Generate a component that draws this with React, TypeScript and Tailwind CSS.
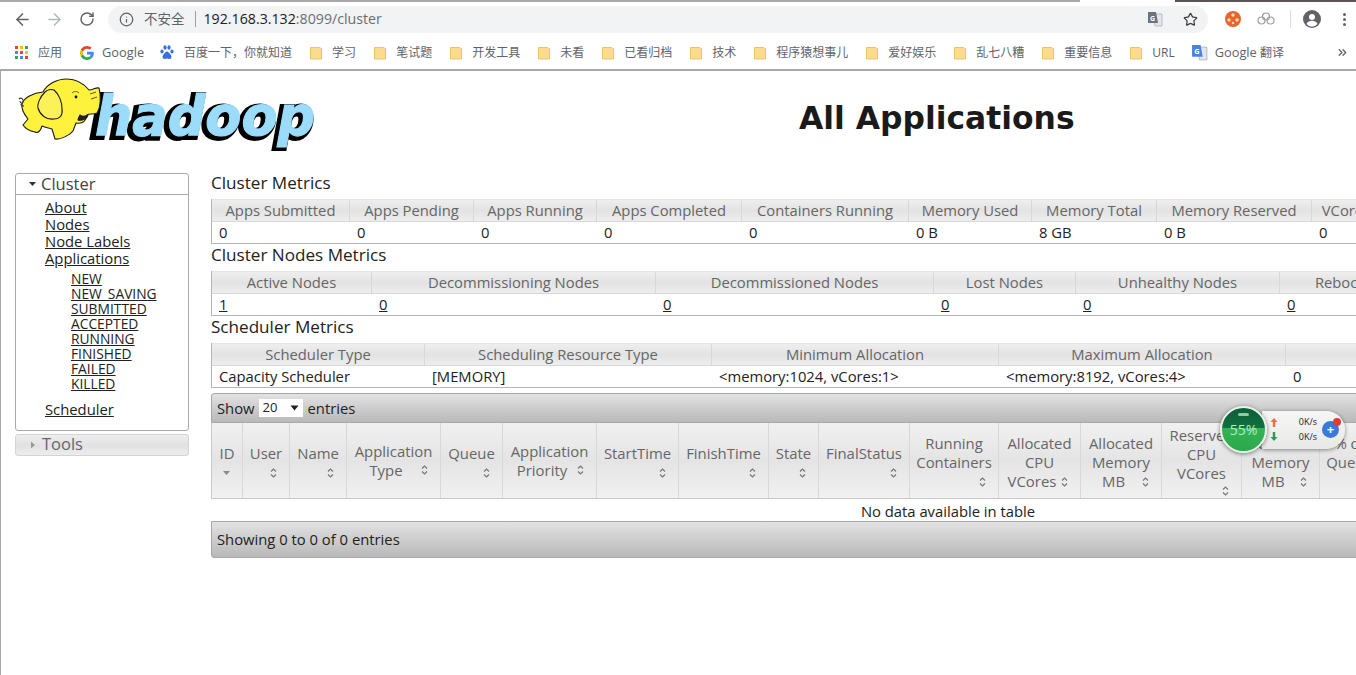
import { ArrowLeft, ArrowRight, RotateCw, Info, Star, ChevronsRight } from 'lucide-react'

const pageFont = { fontFamily: '"Open Sans", "Noto Sans CJK SC", sans-serif' }

const bookmarks = ['学习', '笔试题', '开发工具', '未看', '已看归档', '技术', '程序猿想事儿', '爱好娱乐', '乱七八糟', '重要信息', 'URL']

const clusterMetrics = [
  ['Apps Submitted', '0'],
  ['Apps Pending', '0'],
  ['Apps Running', '0'],
  ['Apps Completed', '0'],
  ['Containers Running', '0'],
  ['Memory Used', '0 B'],
  ['Memory Total', '8 GB'],
  ['Memory Reserved', '0 B'],
  ['VCores Used', '0'],
]

const nodeMetrics = [
  ['Active Nodes', '1'],
  ['Decommissioning Nodes', '0'],
  ['Decommissioned Nodes', '0'],
  ['Lost Nodes', '0'],
  ['Unhealthy Nodes', '0'],
  ['Rebooted Nodes', '0'],
]

const schedulerMetrics = [
  ['Scheduler Type', 'Capacity Scheduler'],
  ['Scheduling Resource Type', '[MEMORY]'],
  ['Minimum Allocation', '<memory:1024, vCores:1>'],
  ['Maximum Allocation', '<memory:8192, vCores:4>'],
  ['Maximum Cluster Application Priority', '0'],
]

const appColumns = [
  { w: 'w-[31px]', pt: 'pt-[5px]', lines: ['ID'], icon: 'down', own: true },
  { w: 'w-[47px]', pt: 'pt-[5px]', lines: ['User'], icon: 'sort', own: true },
  { w: 'w-[57px]', pt: 'pt-[5px]', lines: ['Name'], icon: 'sort', own: true },
  { w: 'w-[94px]', pt: '', lines: ['Application', 'Type'], icon: 'sort' },
  { w: 'w-[62px]', pt: 'pt-[5px]', lines: ['Queue'], icon: 'sort', own: true },
  { w: 'w-[94px]', pt: '', lines: ['Application', 'Priority'], icon: 'sort' },
  { w: 'w-[82px]', pt: 'pt-[5px]', lines: ['StartTime'], icon: 'sort', own: true },
  { w: 'w-[90px]', pt: 'pt-[5px]', lines: ['FinishTime'], icon: 'sort', own: true },
  { w: 'w-[50px]', pt: 'pt-[5px]', lines: ['State'], icon: 'sort', own: true },
  { w: 'w-[91px]', pt: 'pt-[5px]', lines: ['FinalStatus'], icon: 'sort', own: true },
  { w: 'w-[89px]', pt: 'pt-[4px]', lines: ['Running', 'Containers'], icon: 'sort', own: true },
  { w: 'w-[82px]', pt: 'pt-[4px]', lines: ['Allocated', 'CPU', 'VCores'], icon: 'sort' },
  { w: 'w-[81px]', pt: 'pt-[4px]', lines: ['Allocated', 'Memory', 'MB'], icon: 'sort' },
  { w: 'w-[80px]', pt: 'pt-[3px]', lines: ['Reserved', 'CPU', 'VCores'], icon: 'sort', own: true },
  { w: 'w-[78px]', pt: 'pt-[4px]', lines: ['Reserved', 'Memory', 'MB'], icon: 'sort' },
  { w: 'w-[60px]', pt: 'pt-[4px]', lines: ['% of', 'Queue'], icon: 'sort', own: true },
]

function Folder() {
  return (
    <svg width="12" height="14" viewBox="0 0 12 14" className="shrink-0">
      <path d="M.5 1.500h8.500l2.500 1V13H.5z" fill="#fbdc8f" stroke="#e9c468" strokeWidth="1" />
    </svg>
  )
}

function AppsGrid() {
  const colors = ['#ea4335', '#fbbc05', '#34a853', '#4285f4', '#ea4335', '#fbbc05', '#34a853', '#4285f4', '#ea4335']
  return (
    <div className="grid grid-cols-3 gap-[2px] w-[13px] shrink-0">
      {colors.map((c, i) => (
        <span key={i} className="block w-[3px] h-[3px]" style={{ backgroundColor: c }} />
      ))}
    </div>
  )
}

function GoogleG() {
  return (
    <svg width="14" height="14" viewBox="0 0 48 48" className="shrink-0">
      <path fill="#ea4335" d="M24 9.500c3.500 0 6.700 1.300 9.100 3.400l6.800-6.800C35.800 2.400 30.300 0 24 0 14.600 0 6.500 5.400 2.600 13.200l7.900 6.100C12.400 13.600 17.700 9.500 24 9.500z" />
      <path fill="#4285f4" d="M47 24.500c0-1.600-.1-3.100-.4-4.500H24v9h13c-.6 3-2.300 5.500-4.800 7.200l7.700 6C44.400 37.900 47 31.700 47 24.500z" />
      <path fill="#fbbc05" d="M10.500 28.700A14.500 14.500 0 0 1 10.500 19.300l-7.900-6.100a24 24 0 0 0 0 21.600z" />
      <path fill="#34a853" d="M24 48c6.500 0 11.900-2.100 15.900-5.800l-7.700-6c-2.200 1.500-5 2.300-8.200 2.300-6.300 0-11.600-4.100-13.500-9.800l-7.900 6.100C6.500 42.600 14.600 48 24 48z" />
    </svg>
  )
}

function BaiduPaw() {
  return (
    <svg width="14" height="15" viewBox="0 0 14 15" className="shrink-0" fill="#3a6fe0">
      <ellipse cx="2" cy="6.500" rx="1.600" ry="2" />
      <ellipse cx="5" cy="2.500" rx="1.600" ry="2.200" />
      <ellipse cx="9" cy="2.500" rx="1.600" ry="2.200" />
      <ellipse cx="12" cy="6.500" rx="1.600" ry="2" />
      <path d="M7 6.500c-1.800 0-2.300 2-3.500 3C2.300 10.500 2 14 4.500 14c1 0 1.500-.4 2.500-.4s1.500.4 2.500.4c2.500 0 2.200-3.500 1-4.500C9.300 8.500 8.800 6.500 7 6.500z" />
    </svg>
  )
}

function TranslateIcon({ size, tone }: { size: number; tone: string }) {
  return (
    <svg width={size} height={size} viewBox="0 0 16 16" className="shrink-0">
      <path d="M6 3h9v12H8z" fill="#e3e6ea" stroke="#9aa0a6" strokeWidth="0.6" />
      <path d="M1 1h8l2 11H1z" fill={tone} />
      <text x="3" y="9.500" fontSize="7" fontWeight="700" fill="#fff" fontFamily="Open Sans, sans-serif">G</text>
    </svg>
  )
}

function ChromeBar() {
  return (
    <div className="shrink-0 bg-white">
      <div className="flex h-[2px]">
        <div className="w-[1080px] bg-[#a9a9a9]" />
        <div className="w-[95px] bg-white" />
        <div className="flex-1 bg-[#5b5355]" />
      </div>
      <div className="flex items-center h-[34px] pl-[13px] pr-[10px]">
        <ArrowLeft size={19} strokeWidth={2} className="text-[#5f6368] shrink-0" />
        <ArrowRight size={19} strokeWidth={2} className="text-[#b4b7ba] shrink-0 ml-[13px]" />
        <RotateCw size={16} strokeWidth={2.2} className="text-[#5f6368] shrink-0 ml-[15px]" />
        <div className="flex items-center ml-[13px] w-[1100px] h-[27px] rounded-full bg-[#f1f3f4] pl-[11px] pr-[10px]">
          <Info size={15} strokeWidth={2} className="text-[#5f6368] shrink-0" />
          <span className="ml-[10px] text-[13.500px] text-[#5f6368]">不安全</span>
          <span className="ml-[10px] w-px h-[16px] bg-[#9aa0a6]" />
          <span className="ml-[8px] text-[14.200px] text-[#202124]">192.168.3.132<span className="text-[#6b6f73]">:8099/cluster</span></span>
          <div className="ml-auto flex items-center gap-[20px]">
            <TranslateIcon size={16} tone="#6b7280" />
            <Star size={15} strokeWidth={2} className="text-[#3c4043]" />
          </div>
        </div>
        <svg width="16" height="16" viewBox="0 0 16 16" className="ml-[17px] shrink-0">
          <circle cx="8" cy="8" r="8" fill="#e8652a" />
          <circle cx="8" cy="4" r="1.700" fill="#f8e0c8" />
          <circle cx="4" cy="9" r="1.700" fill="#f8e0c8" />
          <circle cx="12" cy="9" r="1.700" fill="#f8e0c8" />
          <circle cx="8" cy="12" r="1.300" fill="#f8e0c8" />
        </svg>
        <svg width="18" height="14" viewBox="0 0 18 14" className="ml-[16px] shrink-0" fill="none" stroke="#9a9ea3" strokeWidth="1.200">
          <circle cx="9" cy="4.500" r="3.500" />
          <circle cx="4.500" cy="8.500" r="3.500" />
          <circle cx="13.500" cy="8.500" r="3.500" />
        </svg>
        <span className="ml-[15px] w-px h-[18px] bg-[#dadce0] shrink-0" />
        <svg width="18" height="18" viewBox="0 0 18 18" className="ml-[12px] shrink-0">
          <circle cx="9" cy="9" r="9" fill="#5f6368" />
          <circle cx="9" cy="7" r="3" fill="#fff" />
          <path d="M3.500 14c1-2.500 3.200-3.200 5.500-3.200s4.500.7 5.500 3.200a7 7 0 0 1-11 0z" fill="#fff" />
        </svg>
        <div className="ml-auto flex flex-col gap-[2px] shrink-0">
          <span className="w-[3px] h-[3px] rounded-full bg-[#5f6368]" />
          <span className="w-[3px] h-[3px] rounded-full bg-[#5f6368]" />
          <span className="w-[3px] h-[3px] rounded-full bg-[#5f6368]" />
        </div>
      </div>
      <div className="flex items-center h-[33px] pl-[15px] pr-[7px] text-[12px] text-[#5f6368] border-b-2 border-[#a8a8a8] box-content">
        <AppsGrid />
        <span className="ml-[10px]">应用</span>
        <div className="ml-[18px]"><GoogleG /></div>
        <span className="ml-[8px] text-[12.800px]">Google</span>
        <div className="ml-[16px]"><BaiduPaw /></div>
        <span className="ml-[10px]">百度一下，你就知道</span>
        <div className="flex items-center gap-[18px] ml-[18px]">
          {bookmarks.map((b) => (
            <div key={b} className="flex items-center gap-[10px]">
              <Folder />
              <span>{b}</span>
            </div>
          ))}
        </div>
        <div className="ml-[16px]"><TranslateIcon size={17} tone="#4d80e4" /></div>
        <span className="ml-[7px]"><span className="text-[12.800px]">Google</span> 翻译</span>
        <ChevronsRight size={13} strokeWidth={2.5} className="ml-auto text-[#5f6368]" />
      </div>
    </div>
  )
}

function HadoopLogo() {
  const wordFont = { fontFamily: '"DejaVu Sans", sans-serif' }
  return (
    <svg width="300" height="74" viewBox="0 0 300 74" className="shrink-0">
      <text x="75" y="60" textLength="222" lengthAdjust="spacingAndGlyphs" fontSize="56" fontWeight="700" fontStyle="italic" fill="#000" stroke="#000" strokeWidth="6" style={wordFont}>hadoop</text>
      <text x="79" y="58" textLength="220" lengthAdjust="spacingAndGlyphs" fontSize="56" fontWeight="700" fontStyle="italic" fill="#9bdcfb" stroke="#9bdcfb" strokeWidth="1.200" style={wordFont}>hadoop</text>
      <g stroke="#1a1a1a" strokeWidth="1.100" strokeLinejoin="round">
        <path d="M6 27C8 20 18 16 27 15C31 7 41 2 51 2C60 2 68 7 73 13C77 13 80 10 83 11C85 18 85 30 81 36C77 38 73 36 71 38C70 44 66 47 60 46L57 54C54 58 44 63 39 62L36 52C32 51 28 50 26 49C25 53 22 57 19 55C14 54 9 51 7 48L12 42C8 37 5 32 6 27Z" fill="#fef23d" />
        <path d="M29 15C24 20 21 27 22 31C24 38 30 43 38 42C44 42 47 38 46 32C46 25 43 17 38 13C35 12 31 13 29 15Z" fill="#fdf159" />
        <path d="M62 43C66 44 71 42 72 38C70 39 66 40 64 38C63 40 62 42 62 43Z" fill="#222" />
      </g>
      <circle cx="60" cy="20" r="1.400" fill="#111" />
      <path d="M74 17l6-2M75 22l6-2M56 16c2-2 5-2 7 0" fill="none" stroke="#333" strokeWidth="0.800" />
      <path d="M3 22c2-2 5 0 4 3c-1 2-3 1-3-1M8 29c-2 0-3-1-3-2" fill="none" stroke="#333" strokeWidth="1.100" />
    </svg>
  )
}

function MetricsTable({ title, cols, data, link }: { title: string; cols: string; data: string[][]; link?: boolean }) {
  return (
    <section>
      <h3 className="h-[27px] leading-[21px] text-[17.100px] text-[#222]">{title}</h3>
      <div className="border-b border-l border-[#b5b5b5] w-max">
        <div className={`grid ${cols} border-t border-[#e6e6e6]`}>
          {data.map(([label]) => (
            <div key={label} className="h-[22px] leading-[21px] text-center text-[14.800px] text-[#666] whitespace-nowrap overflow-hidden border-r border-b border-[#d8d8d8] bg-gradient-to-b from-[#eeeeee] via-[#e3e3e3] to-[#eeeeee]">
              {label}
            </div>
          ))}
          {data.map(([label, value]) => (
            <div key={label} className="h-[21px] leading-[21px] pl-[7px] text-[14.800px] text-[#222] whitespace-nowrap overflow-hidden">
              {link ? <a className="underline">{value}</a> : value}
            </div>
          ))}
        </div>
      </div>
    </section>
  )
}

function SortIcon({ kind }: { kind: string }) {
  if (kind === 'down') {
    return (
      <svg width="15" height="10" viewBox="0 0 15 10" className="shrink-0">
        <path d="M4 3h7L7.500 7z" fill="#8a8a8a" />
      </svg>
    )
  }
  return (
    <svg width="15" height="12" viewBox="0 0 15 12" className="shrink-0" fill="none" stroke="#777" strokeWidth="1.200">
      <path d="M5 4.500L7.500 2 10 4.500M5 7.500L7.500 10 10 7.500" />
    </svg>
  )
}

function AppHeader({ col }: { col: (typeof appColumns)[number] }) {
  const textRows = col.own ? col.lines : col.lines.slice(0, -1)
  const lastLine = col.own ? null : col.lines[col.lines.length - 1]
  return (
    <div className={`${col.w} ${col.pt} shrink-0 h-[75px] flex flex-col justify-center px-[8px] text-[14.900px] leading-[19px] text-[#666] border-r border-[#d8d8d8]`}>
      {textRows.map((line) => (
        <div key={line} className="-mx-[8px] text-center whitespace-nowrap">{line}</div>
      ))}
      {lastLine ? (
        <div className="flex items-center">
          <span className="flex-1 text-center">{lastLine}</span>
          <SortIcon kind={col.icon} />
        </div>
      ) : (
        <div className="flex justify-end h-[19px] items-center">
          <SortIcon kind={col.icon} />
        </div>
      )}
    </div>
  )
}

function Sidebar() {
  const links = ['About', 'Nodes', 'Node Labels', 'Applications']
  const states = ['NEW', 'NEW_SAVING', 'SUBMITTED', 'ACCEPTED', 'RUNNING', 'FINISHED', 'FAILED', 'KILLED']
  return (
    <aside className="w-[174px] shrink-0 pt-[1px]">
      <div className="border border-[#aaa] rounded-[3px] h-[258px]">
        <div className="flex items-center h-[21px] border-b border-[#aaa] pl-[12px] text-[16.500px] text-[#444]">
          <svg width="10" height="8" viewBox="0 0 10 8" className="shrink-0"><path d="M1 2h7L4.500 6z" fill="#333" /></svg>
          <span className="ml-[3px]">Cluster</span>
        </div>
        <ul className="pl-[29px] pt-[4px] text-[14.800px] leading-[17px] text-[#222]">
          {links.map((l) => (
            <li key={l}><a className="underline">{l}</a></li>
          ))}
          <ul className="pl-[26px] pt-[4px] pb-[10px] text-[13.800px] leading-[15px]">
            {states.map((s) => (
              <li key={s}><a className="underline">{s}</a></li>
            ))}
          </ul>
          <li><a className="underline">Scheduler</a></li>
        </ul>
      </div>
      <div className="mt-[3px] flex items-center h-[22px] pb-[1px] rounded-[3px] border border-[#d4d4d4] pl-[13px] text-[16.500px] text-[#666] bg-gradient-to-b from-[#eeeeee] via-[#e2e2e2] to-[#ececec]">
        <svg width="8" height="10" viewBox="0 0 8 10" className="shrink-0"><path d="M2 1.500v7L6 5z" fill="#999" /></svg>
        <span className="ml-[5px]">Tools</span>
      </div>
    </aside>
  )
}

function SpeedWidget() {
  return (
    <div className="absolute left-[1220px] top-[406px] z-10 flex items-center">
      <div className="relative z-10 w-[47px] h-[47px] rounded-full border-2 border-[#e8f2ea] shadow-[0_1px_4px_rgba(0,0,0,0.5)] flex items-center justify-center text-[14px] text-[#b8ecc6] bg-[linear-gradient(180deg,#0d5f38_0%,#0f7040_46%,#35b455_47%,#2aa84c_100%)]">
        <span className="absolute top-[5px] left-[16px] w-[11px] h-[3px] rounded-full bg-[#8fc9a5]" />
        55%
      </div>
      <div className="-ml-[5px] w-[83px] h-[38px] rounded-r-full bg-gradient-to-b from-[#f6f6f4] to-[#e8e8e6] shadow-[0_1px_4px_rgba(0,0,0,0.45)] flex items-center pl-[8px] pr-[6px]">
        <div className="flex flex-col gap-[5px]">
          <svg width="8" height="9" viewBox="0 0 8 9"><path d="M4 0l3.500 4H5.200v5H2.800V4H.5z" fill="#e8704a" /></svg>
          <svg width="8" height="9" viewBox="0 0 8 9"><path d="M4 9L.5 5h2.300V0h2.400v5h2.300z" fill="#2f9a58" /></svg>
        </div>
        <div className="ml-auto flex flex-col gap-[3px] text-[9px] leading-[12px] text-[#222] text-right">
          <span>0K/s</span>
          <span>0K/s</span>
        </div>
        <div className="ml-[5px] relative w-[17px] h-[17px] rounded-full bg-[#3b78d8] text-white text-[13px] leading-[16px] text-center font-bold">
          +
          <span className="absolute -top-[3px] -right-[2px] w-[8px] h-[8px] rounded-full bg-[#e53935]" />
        </div>
      </div>
    </div>
  )
}

export default function App() {
  return (
    <div className="relative w-[1356px] h-[675px] overflow-hidden bg-white flex flex-col" style={pageFont}>
      <ChromeBar />
      <div className="flex-1 border-l border-[#a8a8a8] min-h-0">
        <header className="flex items-start h-[101px]">
          <div className="ml-[15px] mt-[6px]"><HadoopLogo /></div>
          <h1 className="ml-[483px] mt-[26px] text-[31.400px] leading-[42px] font-bold text-[#1a1a1a] whitespace-nowrap" style={{ fontFamily: '"DejaVu Sans", sans-serif' }}>All Applications</h1>
        </header>
        <div className="flex pl-[14px]">
          <Sidebar />
          <main className="ml-[22px] w-[1300px] shrink-0">
            <MetricsTable title="Cluster Metrics" cols="grid-cols-[138px_124px_123px_145px_167px_123px_125px_155px_108px]" data={clusterMetrics} />
            <MetricsTable title="Cluster Nodes Metrics" cols="grid-cols-[160px_284px_278px_142px_204px_186px]" data={nodeMetrics} link />
            <MetricsTable title="Scheduler Metrics" cols="grid-cols-[213px_287px_287px_287px_400px]" data={schedulerMetrics} />
            <div className="mt-[5px] h-[30px] flex items-center pl-[5px] border border-[#a8a8a8] rounded-t-[3px] text-[14.800px] text-[#222] bg-gradient-to-b from-[#e2e2e2] to-[#b9b9b9]">
              Show
              <span className="ml-[4px] mr-[5px] flex items-center justify-between w-[44px] h-[18px] bg-white pl-[4px] pr-[4px] text-[13px]">
                20
                <svg width="9" height="6" viewBox="0 0 9 6"><path d="M0.500 0.500h8L4.500 5.500z" fill="#222" /></svg>
              </span>
              entries
            </div>
            <div className="flex border-l border-b border-[#c8c8c8] w-max bg-gradient-to-b from-[#f1f1f1] via-[#e4e4e4] to-[#f1f1f1]">
              {appColumns.map((c, i) => (
                <AppHeader key={i} col={c} />
              ))}
            </div>
            <div className="h-[22px] leading-[24px] w-[1474px] text-center text-[14.800px] text-[#222]">
              No data available in table
            </div>
            <div className="h-[37px] flex items-center pl-[5px] border border-[#a8a8a8] rounded-b-[3px] text-[14.800px] text-[#222] bg-gradient-to-b from-[#e2e2e2] to-[#b9b9b9]">
              Showing 0 to 0 of 0 entries
            </div>
          </main>
        </div>
      </div>
      <SpeedWidget />
    </div>
  )
}
